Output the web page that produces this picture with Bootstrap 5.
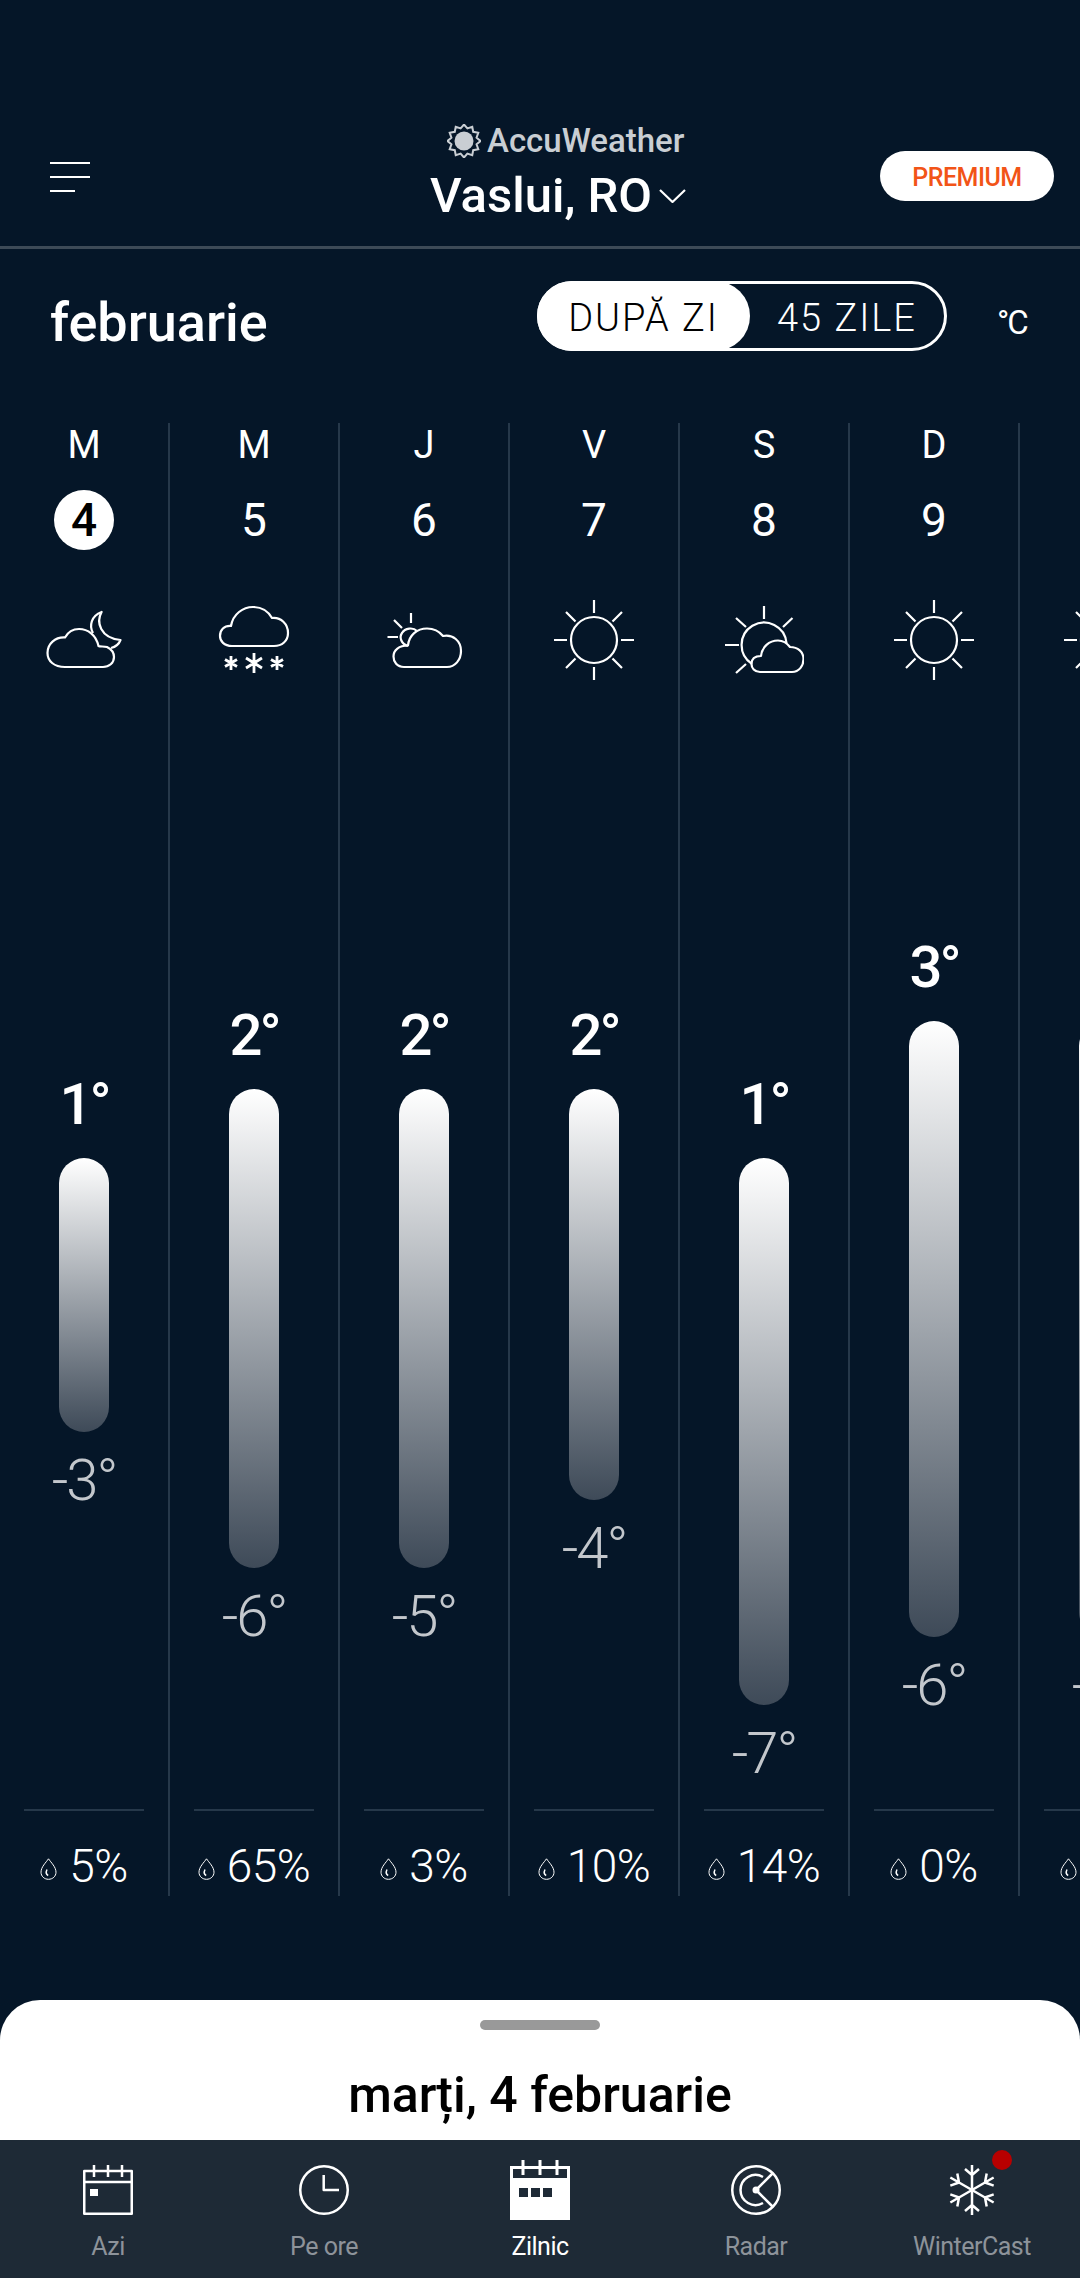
<!DOCTYPE html>
<html lang="ro">
<head>
<meta charset="UTF-8">
<meta name="viewport" content="width=device-width, initial-scale=1.0">
<title>AccuWeather - Zilnic</title>
<link href="https://cdn.jsdelivr.net/npm/bootstrap@5.3.3/dist/css/bootstrap.min.css" rel="stylesheet">
<style>
  html, body { height: 2278px; }
  body {
    background: #051628;
    color: #fff;
    font-family: Roboto, "Liberation Sans", sans-serif;
    overflow: hidden;
  }
  .ico { fill: none; stroke: currentColor; stroke-width: 2.2; stroke-linejoin: round; display: block; }

  /* header */
  .app-head { height: 249px; border-bottom: 3px solid #3d4a57; padding: 124px 26px 0 50px; }
  .menu-box { width: 380px; padding-top: 38px; }
  .head-mid { width: 450px; }
  .logo-row { margin-left: 17px; height: 34px; gap: 6px; color: #c9ced3; font-size: 33px; font-weight: 500; line-height: 34px; }
  .city-row { margin-top: 10px; gap: 7px; font-size: 49px; line-height: 56px; font-weight: 500; }
  .premium-btn { width: 174px; height: 50px; margin-top: 27px; border-radius: 25px; background: #fff; color: #f25417; font-size: 25px; font-weight: 500; letter-spacing: -.5px; line-height: 54px; text-align: center; }

  /* month row */
  .month-row { padding: 32px 50px 0; margin-bottom: 58px; }
  .month-name { font-size: 54px; line-height: 84px; font-weight: 500; }
  .range-toggle { flex: 0 0 410px; height: 70px; border: 3px solid #fff; border-radius: 35px; margin-right: 50px; font-size: 38px; font-weight: 300; letter-spacing: 2px; line-height: 68px; }
  .range-on { width: 213px; height: 70px; margin: -3px 0 -3px -3px; line-height: 74px; border-radius: 35px; background: #fff; color: #000; text-align: center; }
  .range-off { flex: 1; text-align: center; }
  .unit-lbl { flex: 0 0 33px; font-size: 33px; letter-spacing: -2px; line-height: 84px; white-space: nowrap; }

  /* chart */
  .chart-row { height: 1473px; width: 1080px; overflow: hidden; }
  .day-col { flex: 0 0 170px; width: 170px; border-right: 2px solid #26384a; text-align: center; }
  .day-letter { height: 44px; font-size: 38px; line-height: 44px; }
  .day-num { width: 60px; height: 60px; margin: 23px auto 50px; font-size: 46px; line-height: 60px; border-radius: 50%; }
  .day-today { background: #fff; color: #000; font-weight: 500; }
  .wx-box { flex: 0 0 80px; width: 80px; height: 80px; margin: 0 auto; }
  .temp-hi { font-size: 58px; line-height: 72px; height: 72px; margin-bottom: 18px; font-weight: 500; letter-spacing: -3px; }
  .temp-bar { width: 50px; margin: 0 auto; border-radius: 25px; background: linear-gradient(180deg, #fff 0%, #3e4a58 100%); }
  .temp-lo { font-size: 58px; line-height: 60px; margin-top: 18px; color: #c3c7cc; font-weight: 300; letter-spacing: -2px; }
  .rain-rule { width: 120px; height: 2px; margin: 0 auto; background: #26384a; }
  .rain-row { height: 85px; padding-top: 25px; gap: 12px; font-size: 46px; font-weight: 300; line-height: 60px; letter-spacing: -.5px; }
  .rain-drop { margin-top: 22px; stroke-width: 1; }

  /* bottom */
  .sheet-box { height: 140px; margin-top: 104px; background: #fff; color: #000; border-radius: 40px 40px 0 0; padding-top: 20px; overflow: hidden; }
  .sheet-grip { width: 120px; height: 10px; margin: 0 auto; border-radius: 5px; background: #999; }
  .sheet-title { margin-top: 33px; font-size: 50px; line-height: 64px; font-weight: 500; }
  .tab-bar { height: 138px; background: #1e2a36; }
  .tab-item { flex: 0 0 216px; padding: 0; color: #8d939a; font-size: 25px; letter-spacing: -.5px; line-height: 30px; }
  .tab-item.active { color: #fff; }
  .tab-ico { height: 80px; padding-top: 25px; position: relative; }
  .tab-ico .ico { margin: 0 auto; color: #fff; stroke-width: 2.5; }
  .tab-ico .tab-big { margin-top: -5px; }
  .tab-dot { position: absolute; top: 10px; left: 128px; width: 20px; height: 20px; border-radius: 50%; background: #b80000; }
  .tab-lbl { margin-top: 12px; }
</style>
</head>
<body class="d-flex flex-column">

<svg width="0" height="0" class="position-absolute">
  <symbol id="i-sun" viewBox="0 0 80 80">
    <circle cx="40" cy="40" r="23"/>
    <path d="M40 0V13M40 67V80M0 40H13M67 40H80M12 12L21.500 21.500M68 12L58.500 21.500M12 68L21.500 58.500M68 68L58.500 58.500"/>
  </symbol>
  <symbol id="i-drop" viewBox="0 0 17 22">
    <path d="M8.500 .8C6 4.500 1 9 1 14.200C1 18.300 4.300 21.300 8.500 21.300C12.700 21.300 16 18.300 16 14.200C16 9 11 4.500 8.500 .8Z"/>
    <path d="M7 11.500C5.800 14 6.400 16.500 8.200 17.500" stroke-width="1.500"/>
  </symbol>
</svg>

<header class="app-head d-flex align-items-start flex-shrink-0">
  <div class="menu-box">
    <svg class="ico" width="40" height="30" viewBox="0 0 40 30"><path d="M0 1H40M0 15H40M0 29H25"/></svg>
  </div>
  <div class="head-mid">
    <div class="logo-row d-flex align-items-center">
      <svg class="flex-shrink-0" width="34" height="34" viewBox="0 0 34 34" fill="#c9ced3" stroke="#c9ced3"><circle cx="17" cy="17" r="9.500" stroke="none"/><path fill="none" stroke-width="2" d="M17 .5L20.400 4.400L25.250 2.710L26.200 7.800L31.290 8.750L29.560 13.640L33.500 17L29.560 20.360L31.290 25.250L26.200 26.200L25.250 31.290L20.360 29.560L17 33.500L13.640 29.560L8.750 31.290L7.800 26.200L2.710 25.250L4.440 20.360L.5 17L4.440 13.640L2.710 8.750L7.800 7.800L8.750 2.710L13.640 4.440Z"/></svg>
      <span>AccuWeather</span>
    </div>
    <div class="city-row d-flex align-items-center">
      <span>Vaslui, RO</span>
      <svg class="ico" width="27" height="14" viewBox="0 0 27 14"><path d="M1 1L13.500 13L26 1"/></svg>
    </div>
  </div>
  <div class="premium-btn">PREMIUM</div>
</header>

<div class="month-row d-flex align-items-start flex-shrink-0">
  <div class="month-name flex-grow-1">februarie</div>
  <div class="range-toggle d-flex">
    <div class="range-on">DUPĂ ZI</div>
    <div class="range-off">45 ZILE</div>
  </div>
  <div class="unit-lbl">°C</div>
</div>

<div class="chart-row d-flex flex-shrink-0">

  <div class="day-col d-flex flex-column">
    <div class="day-letter">M</div>
    <div class="day-num day-today">4</div>
    <svg class="ico wx-box" viewBox="0 0 80 80">
      <path d="M21 67C10 67 3.500 61 3.500 53C3.500 44 11 37 21 37.500C24 32 29 29 35 29C44 29 52 35 54.500 46C56 47 60 46 63 47C67 49 70 52 70 57C70 63 65 67 59 67Z"/>
      <path d="M49 33C45 26 47 16 57.600 12C52 22 56 38 76.500 40C75 44 71 47 67 48"/>
    </svg>
    <div class="temp-hi" style="margin-top:388px">1°</div>
    <div class="temp-bar" style="height:274px"></div>
    <div class="temp-lo">-3°</div>
    <div class="rain-rule mt-auto"></div>
    <div class="rain-row d-flex justify-content-center"><svg class="ico rain-drop" width="17" height="22"><use href="#i-drop"/></svg><span>5%</span></div>
  </div>

  <div class="day-col d-flex flex-column">
    <div class="day-letter">M</div>
    <div class="day-num">5</div>
    <svg class="ico wx-box" viewBox="0 0 80 80">
      <path d="M18 46C10 46 6 41 6 36C6 30 10 25.500 17 26C19 14 29 7 39 7C47 7 54 11 58 18C67 17 74 24 74 33C74 41 68 46 60 46Z"/>
      <path stroke-width="2.800" d="M17 56V70M11 59.500L23 66.500M11 66.500L23 59.500M40 53V73M32 58L48 68M32 68L48 58M63 56V70M57 59.500L69 66.500M57 66.500L69 59.500"/>
    </svg>
    <div class="temp-hi" style="margin-top:319px">2°</div>
    <div class="temp-bar" style="height:479px"></div>
    <div class="temp-lo">-6°</div>
    <div class="rain-rule mt-auto"></div>
    <div class="rain-row d-flex justify-content-center"><svg class="ico rain-drop" width="17" height="22"><use href="#i-drop"/></svg><span>65%</span></div>
  </div>

  <div class="day-col d-flex flex-column">
    <div class="day-letter">J</div>
    <div class="day-num">6</div>
    <svg class="ico wx-box" viewBox="0 0 80 80">
      <path d="M20 67C13 67 9.500 62 9.500 56.500C9.500 50 15 45.500 24 45.500C25 35 33 28.500 43 28.500C50 28.500 55 31 59 36C69 34 77 41 77 51C77 60 71 67 63 67Z"/>
      <path d="M24 46C17 44 15 37 18 33C21 28 29 27 33 31M27 13V23M10 20L18 28M3.500 37H14"/>
    </svg>
    <div class="temp-hi" style="margin-top:319px">2°</div>
    <div class="temp-bar" style="height:479px"></div>
    <div class="temp-lo">-5°</div>
    <div class="rain-rule mt-auto"></div>
    <div class="rain-row d-flex justify-content-center"><svg class="ico rain-drop" width="17" height="22"><use href="#i-drop"/></svg><span>3%</span></div>
  </div>

  <div class="day-col d-flex flex-column">
    <div class="day-letter">V</div>
    <div class="day-num">7</div>
    <svg class="ico wx-box"><use href="#i-sun"/></svg>
    <div class="temp-hi" style="margin-top:319px">2°</div>
    <div class="temp-bar" style="height:411px"></div>
    <div class="temp-lo">-4°</div>
    <div class="rain-rule mt-auto"></div>
    <div class="rain-row d-flex justify-content-center"><svg class="ico rain-drop" width="17" height="22"><use href="#i-drop"/></svg><span>10%</span></div>
  </div>

  <div class="day-col d-flex flex-column">
    <div class="day-letter">S</div>
    <div class="day-num">8</div>
    <svg class="ico wx-box" viewBox="0 0 80 80">
      <path d="M62.500 43A22.500 22.500 0 1 0 28 64"/>
      <path d="M40 6V19M12 18L22 27M68.500 18L59 27M1 45H15M12 73L22 64"/>
      <path d="M36 72C30.500 72 27.500 68 27.500 64C27.500 59 31 56 37 56C38 47 45 40.500 54 40.500C59 40.500 63 43 66 47C74 47 79.500 52 79.500 59C79.500 66 75 72 68 72Z"/>
    </svg>
    <div class="temp-hi" style="margin-top:388px">1°</div>
    <div class="temp-bar" style="height:547px"></div>
    <div class="temp-lo">-7°</div>
    <div class="rain-rule mt-auto"></div>
    <div class="rain-row d-flex justify-content-center"><svg class="ico rain-drop" width="17" height="22"><use href="#i-drop"/></svg><span>14%</span></div>
  </div>

  <div class="day-col d-flex flex-column">
    <div class="day-letter">D</div>
    <div class="day-num">9</div>
    <svg class="ico wx-box"><use href="#i-sun"/></svg>
    <div class="temp-hi" style="margin-top:251px">3°</div>
    <div class="temp-bar" style="height:616px"></div>
    <div class="temp-lo">-6°</div>
    <div class="rain-rule mt-auto"></div>
    <div class="rain-row d-flex justify-content-center"><svg class="ico rain-drop" width="17" height="22"><use href="#i-drop"/></svg><span>0%</span></div>
  </div>

  <!-- next day only peeks in at the right edge -->
  <div class="day-col d-flex flex-column">
    <div class="day-letter"></div>
    <div class="day-num"></div>
    <svg class="ico wx-box"><use href="#i-sun"/></svg>
    <div class="temp-hi" style="margin-top:251px"></div>
    <div class="temp-bar" style="height:616px"></div>
    <div class="temp-lo">-6°</div>
    <div class="rain-rule mt-auto"></div>
    <div class="rain-row d-flex justify-content-center"><svg class="ico rain-drop" width="17" height="22"><use href="#i-drop"/></svg><span>1%</span></div>
  </div>

</div>

<div class="sheet-box text-center flex-shrink-0">
  <div class="sheet-grip"></div>
  <div class="sheet-title">marți, 4 februarie</div>
</div>

<nav class="tab-bar nav flex-nowrap flex-shrink-0 text-center">
  <a class="tab-item nav-link" href="#">
    <div class="tab-ico"><svg class="ico" width="50" height="50" viewBox="0 0 50 50"><path d="M1.250 6H48.750V48.750H1.250ZM1.250 17H48.750M11 0V12M25 0V12M39 0V12"/><path d="M7 24H15V31H7Z" fill="#fff" stroke="none"/></svg></div>
    <div class="tab-lbl">Azi</div>
  </a>
  <a class="tab-item nav-link" href="#">
    <div class="tab-ico"><svg class="ico" width="50" height="50" viewBox="0 0 50 50"><circle cx="25" cy="25" r="23.750"/><path d="M24.700 10V25H40"/></svg></div>
    <div class="tab-lbl">Pe ore</div>
  </a>
  <a class="tab-item nav-link active" href="#">
    <div class="tab-ico"><svg class="ico tab-big" width="60" height="60" viewBox="0 0 60 60"><path fill="#fff" stroke="none" fill-rule="evenodd" d="M0 6H60V60H0ZM3 9V18H57V9ZM9 28V37H18V28ZM21 28V37H30V28ZM33 28V37H42V28Z"/><path stroke-width="3" d="M13 0V15M30 0V15M47 0V15"/></svg></div>
    <div class="tab-lbl">Zilnic</div>
  </a>
  <a class="tab-item nav-link" href="#">
    <div class="tab-ico"><svg class="ico" width="50" height="50" viewBox="0 0 50 50"><circle cx="25" cy="25" r="23.750"/><path d="M25 25L42 8M25 25L42 42M32 12A15 15 0 1 0 32 38"/><circle cx="25" cy="25" r="3.500" fill="#fff" stroke="none"/></svg></div>
    <div class="tab-lbl">Radar</div>
  </a>
  <a class="tab-item nav-link" href="#">
    <div class="tab-ico">
      <svg class="ico" width="50" height="50" viewBox="0 0 50 50" stroke-width="3">
        <defs><path id="flake-arm" d="M25 25V0M18 4L25 10L32 4"/></defs>
        <use href="#flake-arm"/>
        <use href="#flake-arm" transform="rotate(60 25 25)"/>
        <use href="#flake-arm" transform="rotate(120 25 25)"/>
        <use href="#flake-arm" transform="rotate(180 25 25)"/>
        <use href="#flake-arm" transform="rotate(240 25 25)"/>
        <use href="#flake-arm" transform="rotate(300 25 25)"/>
      </svg>
      <span class="tab-dot"></span>
    </div>
    <div class="tab-lbl">WinterCast</div>
  </a>
</nav>

<script src="https://cdn.jsdelivr.net/npm/bootstrap@5.3.3/dist/js/bootstrap.bundle.min.js"></script>
</body>
</html>
